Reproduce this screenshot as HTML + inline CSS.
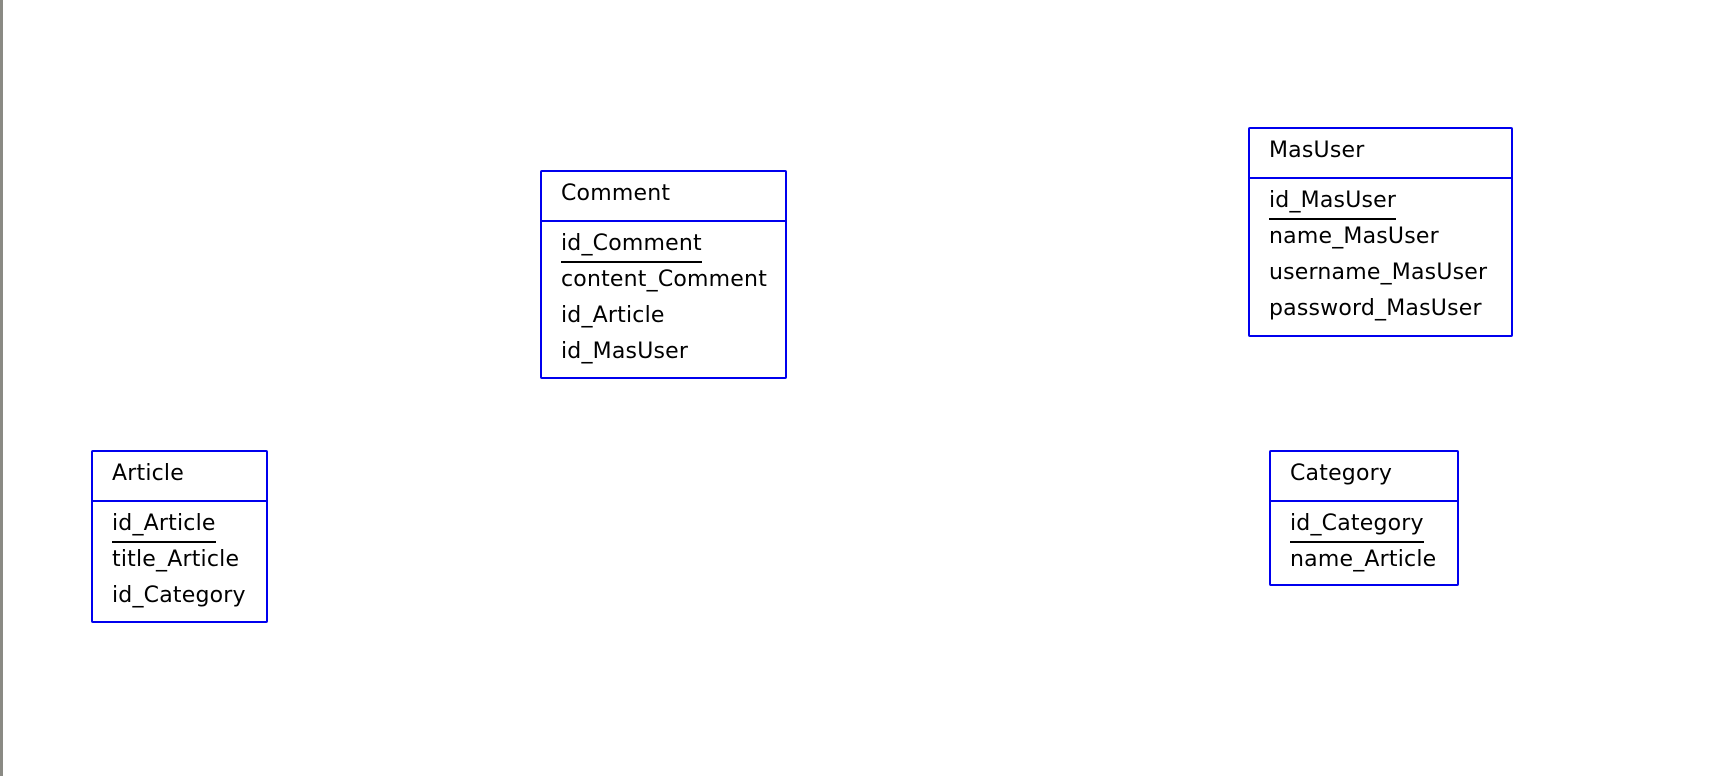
<!DOCTYPE html>
<html><head><meta charset="utf-8"><style>
body{margin:0;width:1736px;height:776px;background:#fff;position:relative;overflow:hidden;font-family:"DejaVu Sans","Liberation Sans",sans-serif;font-size:22px;letter-spacing:0.2px;color:#000}
.bar{position:absolute;left:0;top:0;width:3px;height:776px;background:#8a8a84}
.b{position:absolute;border:2px solid #0000ee;box-sizing:border-box;border-radius:2px}
.b .h{position:absolute;left:0;right:0;top:48px;border-top:2px solid #0000ee}
.t{position:absolute;left:19px;line-height:1;white-space:nowrap}
.u{border-bottom:2px solid #000;padding-bottom:5px}
</style></head><body>
<div class="bar"></div>

<div class="b" style="left:540px;top:170px;width:247px;height:209px">
<div class="h"></div>
<div class="t" style="top:11px">Comment</div>
<div class="t" style="top:61px"><span class="u">id_Comment</span></div>
<div class="t" style="top:97px">content_Comment</div>
<div class="t" style="top:133px">id_Article</div>
<div class="t" style="top:169px">id_MasUser</div>
</div>

<div class="b" style="left:1248px;top:127px;width:265px;height:210px">
<div class="h"></div>
<div class="t" style="top:11px">MasUser</div>
<div class="t" style="top:61px"><span class="u">id_MasUser</span></div>
<div class="t" style="top:97px">name_MasUser</div>
<div class="t" style="top:133px">username_MasUser</div>
<div class="t" style="top:169px">password_MasUser</div>
</div>

<div class="b" style="left:91px;top:450px;width:177px;height:173px">
<div class="h"></div>
<div class="t" style="top:11px">Article</div>
<div class="t" style="top:61px"><span class="u">id_Article</span></div>
<div class="t" style="top:97px">title_Article</div>
<div class="t" style="top:133px">id_Category</div>
</div>

<div class="b" style="left:1269px;top:450px;width:190px;height:136px">
<div class="h"></div>
<div class="t" style="top:11px">Category</div>
<div class="t" style="top:61px"><span class="u">id_Category</span></div>
<div class="t" style="top:97px">name_Article</div>
</div>
</body></html>
